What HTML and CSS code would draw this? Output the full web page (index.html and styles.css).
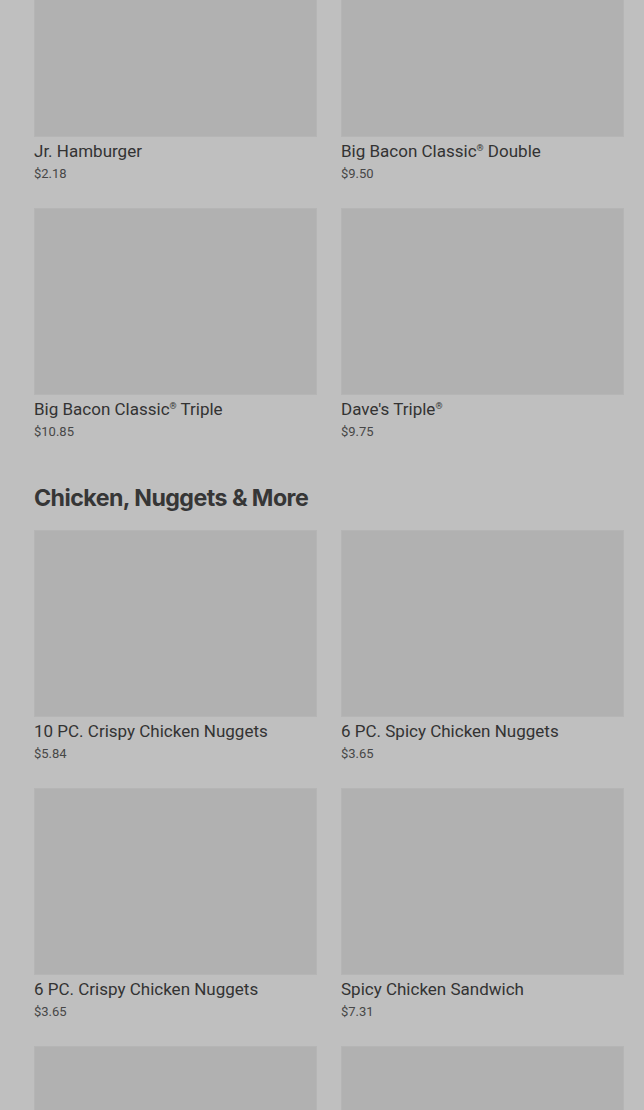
FILE: index.html
```html
<!DOCTYPE html>
<html>
<head>
<meta charset="utf-8">
<link rel="stylesheet" href="styles.css">
</head>
<body>
<main class="menu">
  <section class="section">
    <div class="grid">
      <div class="item"><div class="thumb"></div><div class="name">Jr. Hamburger</div><div class="price">$2.18</div></div>
      <div class="item"><div class="thumb"></div><div class="name">Big Bacon Classic<sup>®</sup> Double</div><div class="price">$9.50</div></div>
      <div class="item"><div class="thumb"></div><div class="name">Big Bacon Classic<sup>®</sup> Triple</div><div class="price">$10.85</div></div>
      <div class="item"><div class="thumb"></div><div class="name">Dave's Triple<sup>®</sup></div><div class="price">$9.75</div></div>
    </div>
  </section>
  <section class="section">
    <h2 class="heading">Chicken, Nuggets &amp; More</h2>
    <div class="grid">
      <div class="item"><div class="thumb"></div><div class="name">10 PC. Crispy Chicken Nuggets</div><div class="price">$5.84</div></div>
      <div class="item"><div class="thumb"></div><div class="name">6 PC. Spicy Chicken Nuggets</div><div class="price">$3.65</div></div>
      <div class="item"><div class="thumb"></div><div class="name">6 PC. Crispy Chicken Nuggets</div><div class="price">$3.65</div></div>
      <div class="item"><div class="thumb"></div><div class="name">Spicy Chicken Sandwich</div><div class="price">$7.31</div></div>
      <div class="item"><div class="thumb"></div></div>
      <div class="item"><div class="thumb"></div></div>
    </div>
  </section>
</main>
</body>
</html>
```

FILE: styles.css
```css
html, body {
  margin: 0;
  padding: 0;
  background: #bfbfbf;
  overflow: hidden;
  height: 1110px;
}
.menu {
  margin-top: -50px;
  padding: 0 20px 0 34px;
  font-family: Roboto, "Liberation Sans", sans-serif;
  color: #3a3a3a;
}
.grid {
  display: grid;
  grid-template-columns: 283px 283px;
  column-gap: 24px;
}
.item {
  padding-bottom: 24px;
}
.thumb {
  height: 187px;
  background: #b1b1b1;
  box-shadow: inset 0 0 0 1px #b5b5b5;
}
.name {
  margin-top: 3px;
  font-size: 17px;
  line-height: 22px;
  font-weight: 400;
  color: #333333;
}
.name sup {
  font-size: 9px;
  line-height: 0;
  vertical-align: 6px;
}
.price {
  margin-top: 2px;
  font-size: 13px;
  line-height: 20px;
  color: #474747;
}
.heading {
  margin: 16px 0 16px;
  font-family: Inter, "Liberation Sans", sans-serif;
  font-size: 23.2px;
  line-height: 32px;
  font-weight: 700;
  letter-spacing: -0.55px;
  color: #363636;
}
```
